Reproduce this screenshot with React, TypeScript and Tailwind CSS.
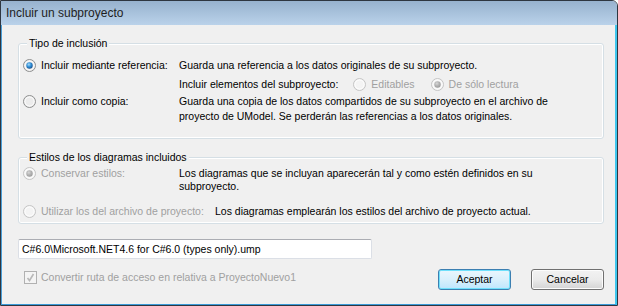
function Radio({ checked = false, disabled = false }: { checked?: boolean; disabled?: boolean }) {
  const ring = disabled ? "#c4c4c4" : "#8e8f8f";
  const fill = disabled ? "#f4f4f4" : "#ececec";
  return (
    <svg width="13" height="13" viewBox="0 0 13 13" className="shrink-0">
      <defs>
        <radialGradient id={`dot-${disabled ? "d" : "e"}`} cx="0.4" cy="0.35" r="0.7">
          <stop offset="0" stopColor={disabled ? "#d8d8d8" : "#a8dcf8"} />
          <stop offset="0.5" stopColor={disabled ? "#b4b4b4" : "#2f8fd8"} />
          <stop offset="1" stopColor={disabled ? "#9a9a9a" : "#1a4f8a"} />
        </radialGradient>
      </defs>
      <circle cx="6.5" cy="6.5" r="6" fill={fill} stroke={ring} strokeWidth="1" />
      <circle cx="6.5" cy="6.5" r="4.5" fill="none" stroke="#ffffff" strokeWidth="1" opacity="0.8" />
      {checked && <circle cx="6.5" cy="6.5" r="3.2" fill={`url(#dot-${disabled ? "d" : "e"})`} />}
    </svg>
  );
}

function Check() {
  return (
    <svg width="13" height="13" viewBox="0 0 13 13" className="shrink-0">
      <rect x="0.5" y="0.5" width="12" height="12" fill="#f4f4f4" stroke="#b1b1b1" />
      <path d="M3.5 7 L5.5 9.5 L9.5 3" fill="none" stroke="#b8b8b8" strokeWidth="1.6" />
    </svg>
  );
}

function Group({ title, children }: { title: string; children: React.ReactNode }) {
  return (
    <div className="relative w-[586px] rounded-[3px] border border-[#d5dfe5] shadow-[inset_0_0_0_1px_#ffffff]">
      <span className="absolute -top-[8px] left-[8px] bg-[#f0f0f0] px-[2px] leading-[15px]">{title}</span>
      {children}
    </div>
  );
}

export default function App() {
  return (
    <div
      className="flex h-[306px] w-[618px] flex-col overflow-hidden rounded-tr-[6px] border-t border-r border-b border-l border-[#2e3640] bg-[#f0f0f0] text-[10.5px] text-black"
      style={{ fontFamily: '"Liberation Sans", Arial, sans-serif' }}
    >
      {/* Title bar */}
      <div className="flex h-[24px] shrink-0 items-center bg-linear-to-b from-[#97b2ce] to-[#bad2ea] pl-[5px] text-[12px] text-[#1e1e1e]">
        Incluir un subproyecto
      </div>

      {/* Body */}
      <div className="flex flex-1 flex-col border-r-2 border-b border-l border-r-[#3ec6ee] border-b-[#3a9ad8] border-l-[#4a9fd8] pl-[16px] leading-[15px]">
        <div className="mt-[18px]">
          <Group title="Tipo de inclusión">
            <div className="flex flex-col pt-[14px] pb-[14px] pl-[4px]">
              <div className="flex items-center">
                <div className="flex w-[156px] items-center gap-[5px]">
                  <Radio checked />
                  <span>Incluir mediante referencia:</span>
                </div>
                <span>Guarda una referencia a los datos originales de su subproyecto.</span>
              </div>
              <div className="mt-[4px] flex items-center pl-[156px]">
                <span>Incluir elementos del subproyecto:</span>
                <div className="ml-[15px] flex items-center gap-[5px] text-[#a0a0a0]">
                  <Radio disabled />
                  <span>Editables</span>
                </div>
                <div className="ml-[16px] flex items-center gap-[5px] text-[#a0a0a0]">
                  <Radio checked disabled />
                  <span>De sólo lectura</span>
                </div>
              </div>
              <div className="mt-[2px] flex items-start">
                <div className="flex h-[15px] w-[156px] items-center gap-[5px]">
                  <Radio />
                  <span>Incluir como copia:</span>
                </div>
                <span className="w-[400px]">
                  Guarda una copia de los datos compartidos de su subproyecto en el archivo de proyecto de UModel. Se perderán las referencias a los datos originales.
                </span>
              </div>
            </div>
          </Group>
        </div>

        <div className="mt-[18px]">
          <Group title="Estilos de los diagramas incluidos">
            <div className="flex flex-col pt-[9px] pb-[5px] pl-[4px] leading-[13px]">
              <div className="flex items-start">
                <div className="flex h-[13px] w-[156px] items-center gap-[5px] text-[#a0a0a0]">
                  <Radio checked disabled />
                  <span>Conservar estilos:</span>
                </div>
                <span className="w-[380px]">
                  Los diagramas que se incluyan aparecerán tal y como estén definidos en su subproyecto.
                </span>
              </div>
              <div className="mt-[12px] flex items-center">
                <div className="flex w-[192px] items-center gap-[5px] text-[#a0a0a0]">
                  <Radio disabled />
                  <span>Utilizar los del archivo de proyecto:</span>
                </div>
                <span>Los diagramas emplearán los estilos del archivo de proyecto actual.</span>
              </div>
            </div>
          </Group>
        </div>

        <div className="mt-[15px] flex h-[20px] w-[354px] items-center rounded-[2px] border border-[#dbdfe6] border-t-[#abadb3] bg-white pl-[3px]">
          C#6.0\Microsoft.NET4.6 for C#6.0 (types only).ump
        </div>

        <div className="mt-[10px] flex w-[586px] items-start">
          <div className="mt-[1px] flex items-center gap-[4px] pl-[6px] text-[#a0a0a0]">
            <Check />
            <span>Convertir ruta de acceso en relativa a ProyectoNuevo1</span>
          </div>
          <div className="ml-auto flex gap-[20px]">
            <button className="flex h-[21px] w-[73px] items-center justify-center rounded-[3px] border border-[#3c7fb1] bg-linear-to-b from-[#eaf6fd] via-[#d9f0fc] to-[#bee6fd] shadow-[inset_0_0_0_1px_#6fe0fb]">
              Aceptar
            </button>
            <button className="flex h-[21px] w-[73px] items-center justify-center rounded-[3px] border border-[#707070] bg-linear-to-b from-[#f2f2f2] via-[#ebebeb] to-[#d4d4d4] shadow-[inset_0_0_0_1px_#fcfcfc]">
              Cancelar
            </button>
          </div>
        </div>
      </div>
    </div>
  );
}
